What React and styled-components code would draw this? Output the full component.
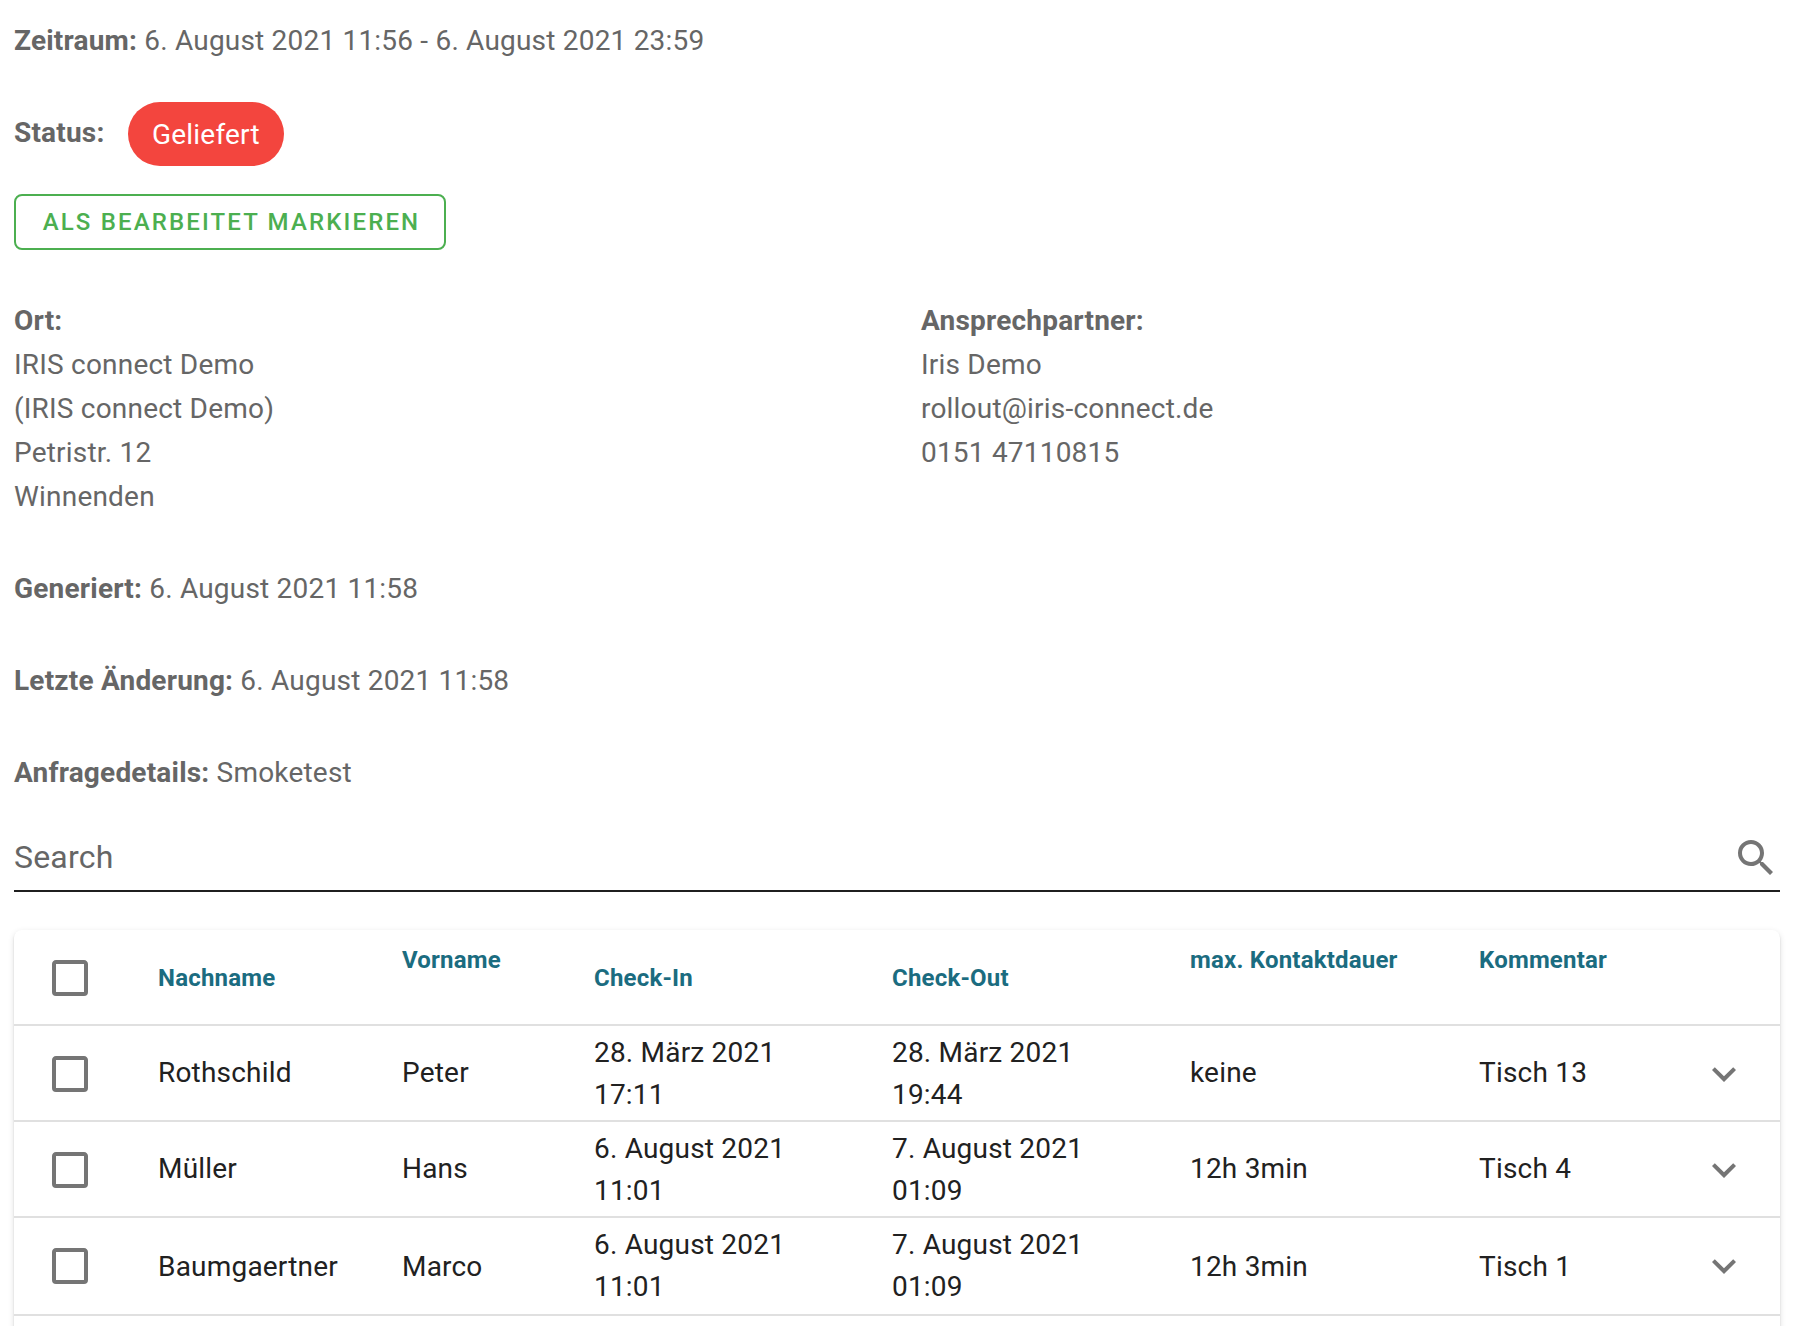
import React from "react";
import styled, { createGlobalStyle } from "styled-components";

const GlobalStyle = createGlobalStyle`
  *, *::before, *::after { box-sizing: border-box; }
  body { margin: 0; background: #fff; }
`;

const Page = styled.main`
  height: 1326px;
  overflow: hidden;
  padding: 19px 28px 0 14px;
  background: #fff;
  color: #666;
  font: 400 28px/44px Roboto, sans-serif;
  letter-spacing: 0.2px;
`;

const Field = styled.div`
  margin-bottom: 48px;
`;

const Label = styled.strong`
  font-weight: 700;
`;

const StatusRow = styled.div`
  display: flex;
  align-items: flex-start;
  height: 64px;
  margin: -9px 0 28px;
  & > ${Label} {
    padding-top: 9px;
    width: 114px;
  }
`;

const Chip = styled.span`
  height: 64px;
  padding: 0 24px;
  border-radius: 32px;
  background: #f3453e;
  color: #fff;
  line-height: 65px;
`;

const OutlinedButton = styled.button`
  display: block;
  height: 56px;
  width: 432px;
  padding: 0 0 0 3px;
  border: 2px solid #4caf50;
  border-radius: 8px;
  background: transparent;
  color: #4caf50;
  font: 500 24px/36px Roboto, sans-serif;
  letter-spacing: 2.143px;
  text-transform: uppercase;
  white-space: nowrap;
`;

const Columns = styled.section`
  display: grid;
  grid-template-columns: 907px 1fr;
  margin: 49px 0 48px;
`;

const SearchField = styled.div`
  display: flex;
  align-items: center;
  justify-content: space-between;
  height: 68px;
  margin-top: -19px;
  padding-top: 2px;
  border-bottom: 2px solid #1f1f1f;
  font-size: 32px;
`;

const SearchLabel = styled.span`
  padding-bottom: 2px;
`;

const Icon = styled.svg`
  display: block;
  width: 48px;
  height: 48px;
  fill: #757575;
`;

const Card = styled.section`
  height: 460px;
  margin-top: 38px;
  border-radius: 8px;
  background: #fff;
  box-shadow: 0 4px 2px -2px rgba(0, 0, 0, 0.2), 0 2px 2px rgba(0, 0, 0, 0.14),
    0 2px 6px rgba(0, 0, 0, 0.12);
`;

const Row = styled.div`
  display: grid;
  grid-template-columns: 112px 244px 192px 298px 298px 289px 221px 1fr;
  height: ${(p) => (p.$tall ? 98 : 96)}px;
  padding-left: 32px;
  border-bottom: 2px solid #e0e0e0;
`;

const IconCell = styled.div`
  padding-top: 24px;
`;

const HeadCell = styled.div`
  padding-top: ${(p) => (p.$sortable ? 30 : 12)}px;
  color: #1b6c80;
  font-size: 24px;
  font-weight: 700;
  line-height: 36px;
`;

const Cell = styled.div`
  padding-top: ${(p) => (p.$tall ? 28 : 26)}px;
  color: #212121;
  line-height: 42px;
`;

const DateCell = styled(Cell)`
  padding-top: 6px;
  padding-right: 90px;
`;

const Checkbox = () => (
  <Icon viewBox="0 0 24 24">
    <path d="M19,3H5C3.89,3 3,3.89 3,5V19A2,2 0 0,0 5,21H19A2,2 0 0,0 21,19V5C21,3.89 20.1,3 19,3M19,5V19H5V5H19Z" />
  </Icon>
);

const ChevronDown = () => (
  <Icon viewBox="0 0 24 24">
    <path d="M7.41,8.58L12,13.17L16.59,8.58L18,10L12,16L6,10L7.41,8.58Z" />
  </Icon>
);

const Magnify = () => (
  <Icon viewBox="0 0 24 24">
    <path d="M9.5,3A6.5,6.5 0 0,1 16,9.5C16,11.11 15.41,12.59 14.44,13.73L14.71,14H15.5L20.5,19L19,20.5L14,15.5V14.71L13.73,14.44C12.59,15.41 11.11,16 9.5,16A6.5,6.5 0 0,1 3,9.5A6.5,6.5 0 0,1 9.5,3M9.5,5C7,5 5,7 5,9.5C5,12 7,14 9.5,14C12,14 14,12 14,9.5C14,7 12,5 9.5,5Z" />
  </Icon>
);

const headers = [
  ["Nachname", true],
  ["Vorname", false],
  ["Check-In", true],
  ["Check-Out", true],
  ["max. Kontaktdauer", false],
  ["Kommentar", false],
];

const guests = [
  { last: "Rothschild", first: "Peter", in: "28. März 2021 17:11", out: "28. März 2021 19:44", duration: "keine", comment: "Tisch 13" },
  { last: "Müller", first: "Hans", in: "6. August 2021 11:01", out: "7. August 2021 01:09", duration: "12h 3min", comment: "Tisch 4" },
  { last: "Baumgaertner", first: "Marco", in: "6. August 2021 11:01", out: "7. August 2021 01:09", duration: "12h 3min", comment: "Tisch 1", tall: true },
];

export default function App() {
  return (
    <>
      <GlobalStyle />
      <Page>
        <Field>
          <Label>Zeitraum:</Label> 6. August 2021 11:56 - 6. August 2021 23:59
        </Field>
        <StatusRow>
          <Label>Status:</Label>
          <Chip>Geliefert</Chip>
        </StatusRow>
        <OutlinedButton>Als bearbeitet markieren</OutlinedButton>
        <Columns>
          <div>
            <Label>Ort:</Label>
            <div>IRIS connect Demo</div>
            <div>(IRIS connect Demo)</div>
            <div>Petristr. 12</div>
            <div>Winnenden</div>
          </div>
          <div>
            <Label>Ansprechpartner:</Label>
            <div>Iris Demo</div>
            <div>rollout@iris-connect.de</div>
            <div>0151 47110815</div>
          </div>
        </Columns>
        <Field>
          <Label>Generiert:</Label> 6. August 2021 11:58
        </Field>
        <Field>
          <Label>Letzte Änderung:</Label> 6. August 2021 11:58
        </Field>
        <Field>
          <Label>Anfragedetails:</Label> Smoketest
        </Field>
        <SearchField>
          <SearchLabel>Search</SearchLabel>
          <Magnify />
        </SearchField>
        <Card>
          <Row>
            <IconCell>
              <Checkbox />
            </IconCell>
            {headers.map(([text, sortable]) => (
              <HeadCell key={text} $sortable={sortable}>
                {text}
              </HeadCell>
            ))}
          </Row>
          {guests.map((g) => (
            <Row key={g.last} $tall={g.tall}>
              <IconCell>
                <Checkbox />
              </IconCell>
              <Cell $tall={g.tall}>{g.last}</Cell>
              <Cell $tall={g.tall}>{g.first}</Cell>
              <DateCell>{g.in}</DateCell>
              <DateCell>{g.out}</DateCell>
              <Cell $tall={g.tall}>{g.duration}</Cell>
              <Cell $tall={g.tall}>{g.comment}</Cell>
              <IconCell>
                <ChevronDown />
              </IconCell>
            </Row>
          ))}
        </Card>
      </Page>
    </>
  );
}
